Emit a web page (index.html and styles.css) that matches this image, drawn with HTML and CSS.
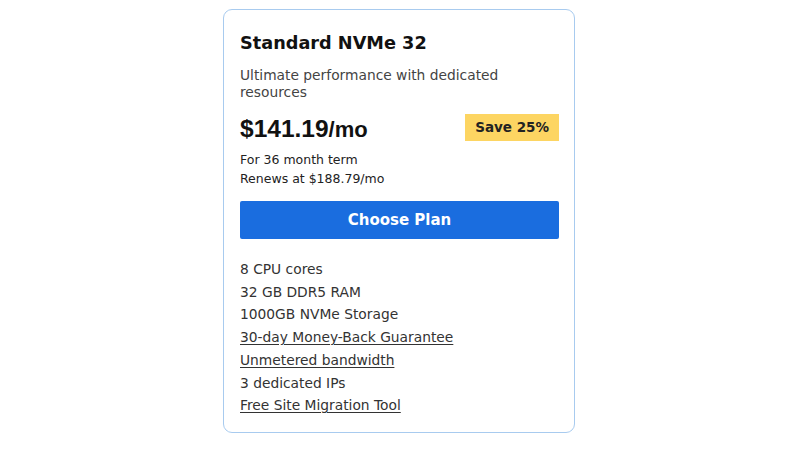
FILE: index.html
```html
<!DOCTYPE html>
<html lang="en">
<head>
<meta charset="utf-8">
<title>Standard NVMe 32</title>
<link rel="stylesheet" href="styles.css">
</head>
<body>
<main class="page">
  <section class="card">
    <h2 class="title">Standard NVMe 32</h2>
    <p class="desc">Ultimate performance with dedicated resources</p>
    <div class="price-row">
      <div class="price"><span class="amount">$141.19</span><span class="per">/mo</span></div>
      <span class="badge">Save 25%</span>
    </div>
    <div class="terms">
      <p class="term">For 36 month term</p>
      <p class="term">Renews at $188.79/mo</p>
    </div>
    <button class="cta" type="button">Choose Plan</button>
    <ul class="features">
      <li>8 CPU cores</li>
      <li>32 GB DDR5 RAM</li>
      <li>1000GB NVMe Storage</li>
      <li><a href="#">30-day Money-Back Guarantee</a></li>
      <li><a href="#">Unmetered bandwidth</a></li>
      <li>3 dedicated IPs</li>
      <li><a href="#">Free Site Migration Tool</a></li>
    </ul>
  </section>
</main>
</body>
</html>
```
FILE: styles.css
```css
* { box-sizing: border-box; }
html, body { margin: 0; padding: 0; background: #fff; }
body { font-family: "DejaVu Sans", "Open Sans", sans-serif; color: #1d1d1f; }
.page { display: flex; justify-content: center; padding-top: 9px; padding-right: 2px; }
.card {
  width: 352px;
  height: 424px;
  border: 1px solid #a8cbef;
  border-radius: 9px;
  padding: 22px 15px 0 16px;
  display: flex;
  flex-direction: column;
}
.title { margin: 0; font-size: 17.7px; font-weight: 700; line-height: 22px; color: #111; }
.desc { margin: 13px 0 0; font-size: 13.8px; line-height: 17px; color: #444; }
.price-row { display: flex; justify-content: space-between; align-items: flex-start; margin-top: 13px; }
.price { font-family: "Liberation Sans", Arial, sans-serif; font-weight: 700; color: #111; font-size: 24.5px; line-height: 30px; }
.per { font-size: 22px; }
.badge { background: #fdd562; font-size: 13.5px; font-weight: 700; color: #222; padding: 0 10px; line-height: 27px; }
.terms { margin-top: 5px; }
.term { margin: 0; font-size: 12.5px; line-height: 19px; color: #222; }
.cta {
  margin-top: 13px;
  height: 38px;
  border: 0;
  border-radius: 2px;
  background: #1a6ddf;
  color: #fff;
  font-family: inherit;
  font-size: 15px;
  font-weight: 700;
  width: 100%;
}
.features { list-style: none; margin: 19px 0 0; padding: 0; }
.features li { font-size: 13.8px; line-height: 22.7px; color: #333; }
.features a { color: #333; text-decoration: underline; text-underline-offset: 2px; }
```
